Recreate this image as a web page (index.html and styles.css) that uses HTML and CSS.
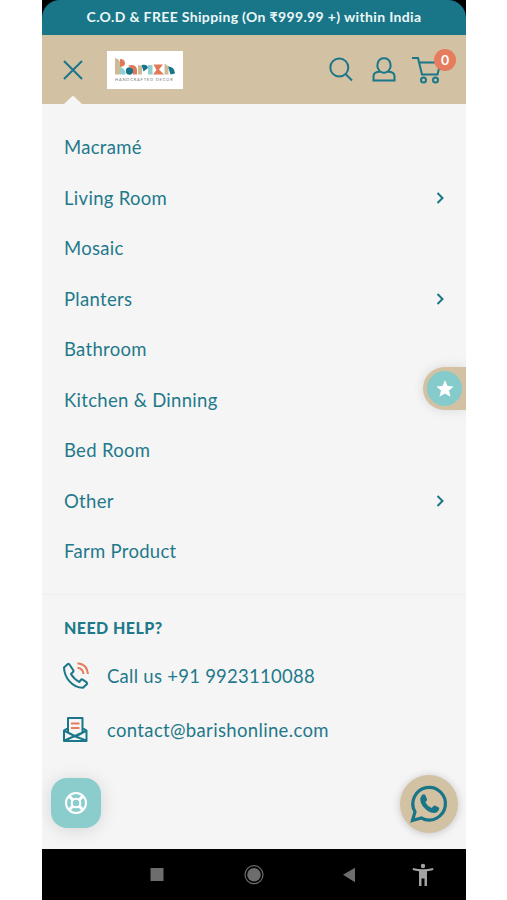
FILE: index.html
```html
<!DOCTYPE html>
<html lang="en">
<head>
<meta charset="utf-8">
<meta name="viewport" content="width=device-width, initial-scale=1">
<title>Barish – Menu</title>
<link rel="stylesheet" href="styles.css">
</head>
<body>
<div class="phone">
  <div class="announce"><p>C.O.D &amp; FREE Shipping (On ₹999.99 +) within India</p></div>
  <header class="header">
    <button class="close" aria-label="Close menu"><svg width="20" height="20" viewBox="0 0 20 20"><path d="M1 1l18 18M19 1L1 19"/></svg></button>
    <a class="logo" aria-label="Barish Handcrafted Decor">
      <svg width="60" height="17" viewBox="0 0 60 17">
        <path fill="#cdbb98" d="M0 0q5 1 5 5v11.500H0z"/>
        <path fill="#e27858" d="M5 1q5 0 5 4.500q0 3-5 3.500z"/>
        <path fill="#8fcfce" d="M5 9q5.500 1 5.500 7.500H5z"/>
        <circle cx="14.500" cy="13" r="3.700" fill="#187488"/>
        <path fill="#e27858" d="M13 7.500q8-2 9 4v5h-4v-5z"/>
        <path fill="#cdbb98" d="M23 7l4 1v8.500h-4z"/>
        <path fill="#187488" d="M26.500 7q6-1 6.500 3l-4.500 3.500z"/>
        <path fill="#8fcfce" d="M33 7h4.500v9.500H33z"/>
        <path fill="#e27858" d="M38.500 6.500H48l-4 5 5 5H38l3.500-4.500z"/>
        <path fill="#cdbb98" d="M49.500 5.500l4 3v8h-4z"/>
        <path fill="#187488" d="M53 8.500q6.500 0 7 7l-4.500 1z"/>
      </svg>
      <span>HANDCRAFTED DECOR</span>
    </a>
    <nav class="tools">
      <svg width="24" height="25" viewBox="0 0 24 25"><circle cx="10.300" cy="10.500" r="9"/><path d="M16.500 17l6.500 6.500"/></svg>
      <svg width="24" height="25" viewBox="0 0 24 25"><path d="M8.200 14.500C3.500 10.500 5 1.200 12 1.200s8.500 9.300 3.800 13.300q6.700 .5 6.700 4.500v4.500h-21V19q0-4 6.700-4.500q3.800 2.600 7.600 0"/></svg>
      <div class="cart">
        <svg width="29" height="27" viewBox="0 0 29 27"><path d="M0 1h6l4 16.500h15.500l3-12H7.500"/><circle cx="11.500" cy="23" r="2.500"/><circle cx="23.500" cy="23" r="2.500"/></svg>
        <span class="badge">0</span>
      </div>
    </nav>
    <i class="notch"></i>
  </header>
  <main class="drawer">
    <ul class="menu">
      <li>Macramé</li>
      <li>Living Room <svg width="8" height="12" viewBox="0 0 8 12"><path d="M1.500 1l5 5-5 5"/></svg></li>
      <li>Mosaic</li>
      <li>Planters <svg width="8" height="12" viewBox="0 0 8 12"><path d="M1.500 1l5 5-5 5"/></svg></li>
      <li>Bathroom</li>
      <li>Kitchen &amp; Dinning</li>
      <li>Bed Room</li>
      <li>Other <svg width="8" height="12" viewBox="0 0 8 12"><path d="M1.500 1l5 5-5 5"/></svg></li>
      <li>Farm Product</li>
    </ul>
    <section class="help">
      <h2>NEED HELP?</h2>
      <a class="contact phone-line">
        <svg width="26" height="27" viewBox="0 0 26 27"><path d="M4.800 2L1 5.500C1.300 15.500 9 25.500 20 25.800l4-3.800q.6-.8-.3-1.600l-4-2.800q-1-.5-1.700.2l-1.800 2.200Q10.500 16.500 8 12l2.200-2.200q.7-.8.1-1.600L6.300 2.300q-.7-.8-1.500-.3z"/><g class="accent"><path d="M14.500 1.200q9.500 .8 10.500 10.800M14.500 5.700q5.500 .8 6 6.300"/></g></svg>
        <span>Call us +91 9923110088</span>
      </a>
      <a class="contact mail-line">
        <svg width="25" height="25" viewBox="0 0 25 25"><path d="M5 11L1 13.500V24h22.500V13.500L19.500 11M5 15.500V1h14.500v14.500M1 13.500l11.500 6 11-6M1.500 23.500l16-7M12.500 19.500l10.500 4"/><g class="accent"><path d="M8 6.500h8.500M8 11h8.500"/></g></svg>
        <span>contact@barishonline.com</span>
      </a>
    </section>
  </main>
  <footer class="sysbar">
    <svg width="424" height="51" viewBox="0 0 424 51">
      <path fill="#6d6d6d" d="M108.500 19h13v13h-13z"/>
      <circle cx="212" cy="25.700" r="9" fill="none" stroke="#6d6d6d" stroke-width="1.200"/><circle cx="212" cy="25.700" r="6.800" fill="#6d6d6d"/>
      <path fill="#6d6d6d" d="M301 25.700l12-7v14.500z"/>
      <g fill="#a3a3a3"><circle cx="381" cy="17" r="2.200"/><path d="M371 19q10 2.500 20 0l.4 2q-3 .8-6.400 1.200V37h-2.500v-7.500h-3V37H377V22.200q-3.400-.4-6.400-1.200z"/></g>
    </svg>
  </footer>

  <div class="rewards"><div><svg width="18" height="18" viewBox="0 0 18 18"><path d="M9 .3l2.500 5.700 6.200.5-4.700 4 1.500 6.200L9 13.400l-5.500 3.300L5 10.500l-4.700-4 6.200-.5z"/></svg></div></div>
  <div class="support"><svg width="24" height="24" viewBox="0 0 24 24"><circle cx="12" cy="12" r="10"/><circle cx="12" cy="12" r="4.300"/><path class="thick" d="M5.500 5.500L9 9M18.500 5.500L15 9M5.500 18.500L9 15M18.500 18.500L15 15"/></svg></div>
  <div class="whatsapp"><svg width="38" height="38" viewBox="0 0 38 38"><path class="ring" d="M2.500 35.500L5 26.800A16.300 16.300 0 1 1 11.300 33z"/><path class="handset" d="M12 10q1-1 2.500-.5.700.2 1 1l1.500 3.500q.3 1-.4 1.700L15.300 17.300q2.200 4 6.400 5.800l1.800-2.100q.7-.7 1.500-.4l3.800 1.900q.7.500.4 1.500-1.200 4-5.300 4Q18 27.500 13 21.500 8 15 12 10z"/></svg></div>
</div>
</body>
</html>
```
FILE: styles.css
```css
* { box-sizing: border-box; margin: 0; padding: 0; }
body { background: #fff; font-family: Lato, "Noto Sans", sans-serif; color: #1f798b; }
svg { display: block; flex: none; overflow: visible; fill: none; }
.phone { position: relative; width: 424px; height: 900px; margin-left: 42px; display: flex; flex-direction: column; background: #000; overflow: hidden; }
.announce { flex: none; height: 35px; display: flex; align-items: center; justify-content: center; padding-bottom: 3px; background: #197689; border-radius: 18px 18px 0 0; color: #edf7f7; font-size: 14px; letter-spacing: .35px; font-weight: 700; white-space: nowrap; }
.header { position: relative; flex: none; height: 69px; display: flex; align-items: center; padding: 0 25px 0 21px; background: #d2c1a2; }
.close { width: 20px; height: 20px; border: 0; background: none; margin-right: 24px; }
.close svg, .tools svg { stroke: #1a7689; stroke-width: 2; }
.logo { width: 76px; height: 38px; padding: 7px 8px; background: #fff; display: flex; flex-direction: column; gap: 2px; }
.logo span { font-size: 4px; line-height: 5px; letter-spacing: .83px; white-space: nowrap; color: #777; }
.tools { margin-left: auto; display: flex; align-items: flex-start; gap: 19px; padding-top: 1px; }
.tools > svg { position: relative; left: 2.500px; }
.cart { position: relative; }
.badge { position: absolute; left: 22px; top: -8px; width: 22px; height: 22px; border-radius: 50%; background: #e57c5e; color: #fff; font-size: 14px; font-weight: 700; line-height: 22px; text-align: center; }
.notch { position: absolute; left: 22px; bottom: 0; width: 18px; height: 8px; background: #f5f5f5; clip-path: polygon(0 100%, 42% 10%, 50% 0, 58% 10%, 100% 100%); }
.drawer { flex: none; height: 745px; background: #f5f5f5; padding-top: 17.800px; }
.menu { list-style: none; height: 473px; padding: 0 22px 0 22px; border-bottom: 1px solid #eee; }
.menu li { height: 50.500px; display: flex; align-items: center; justify-content: space-between; font-size: 18.500px; letter-spacing: .3px; }
.menu svg { stroke: #1a7689; stroke-width: 2; margin-top: 1px; }
.help { padding: 22px 21px; }
.help h2 { padding-left: 1px; font-size: 16px; line-height: 22px; font-weight: 900; letter-spacing: .45px; }
.contact { display: flex; align-items: center; gap: 18px; height: 54px; font-size: 18.500px; letter-spacing: .26px; white-space: nowrap; }
.phone-line { margin-top: 10px; }
.mail-line { gap: 19px; letter-spacing: .34px; }
.contact svg { stroke: #1a7689; stroke-width: 2; stroke-linejoin: round; }
.contact .accent { stroke: #e57c5e; }
.sysbar { height: 51px; background: #000; }
.rewards { position: absolute; right: 0; top: 367px; width: 43px; height: 43px; padding: 4px; border-radius: 22px 0 0 22px; background: #d2c1a2; box-shadow: 0 0 12px rgba(0,0,0,.12); }
.rewards div { width: 35px; height: 35px; border-radius: 50%; background: #86cbcc; display: grid; place-items: center; }
.rewards svg { fill: #fff; }
.support { position: absolute; left: 8.500px; top: 778px; width: 50px; height: 50px; border-radius: 16px; background: #8bcccc; box-shadow: 0 2px 18px rgba(0,0,0,.13); display: grid; place-items: center; }
.support svg { stroke: #fff; stroke-width: 2; }
.support .thick { stroke-width: 3; }
.whatsapp { position: absolute; right: 8px; top: 775px; width: 58px; height: 58px; border-radius: 50%; background: #d2c1a2; box-shadow: 0 1px 8px rgba(0,0,0,.2); display: grid; place-items: center; }
.ring { stroke: #197689; stroke-width: 3.200; }
.handset { fill: #197689; }
```
